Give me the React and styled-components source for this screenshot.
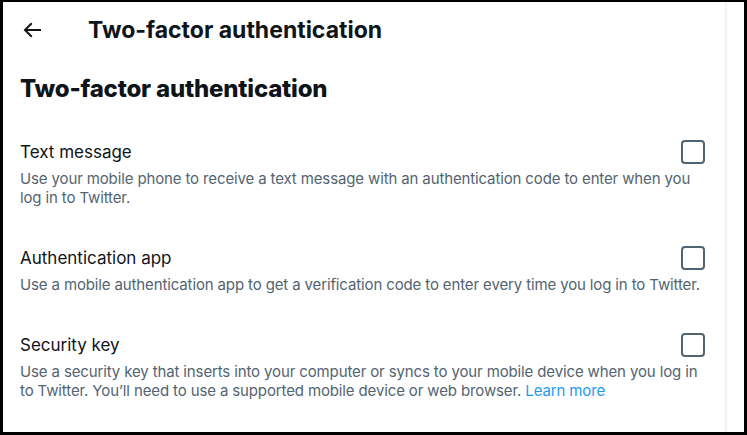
import React from "react";
import styled, { createGlobalStyle } from "styled-components";

const GlobalStyle = createGlobalStyle`
  html, body {
    margin: 0;
    padding: 0;
    background: #fff;
  }
  body {
    font-family: Inter, "Liberation Sans", Arial, sans-serif;
    color: #0f1419;
    -webkit-font-smoothing: antialiased;
  }
`;

const Frame = styled.div`
  width: 747px;
  height: 435px;
  box-sizing: border-box;
  border: 3px solid #000;
  border-top-width: 2px;
  background: #fff;
  overflow: hidden;
  display: flex;
`;

const Column = styled.div`
  width: 724px;
  box-sizing: border-box;
  border-right: 2px solid #eff3f4;
  display: flex;
  flex-direction: column;
  overflow: hidden;

  & > * {
    flex-shrink: 0;
  }
`;

const Header = styled.div`
  height: 55px;
  padding-left: 17px;
  display: flex;
  align-items: center;
`;

const BackButton = styled.div`
  width: 24px;
  height: 24px;
  display: flex;
  color: #0f1419;
  margin-right: 44px;
`;

const HeaderTitle = styled.h2`
  margin: 0;
  font-size: 23px;
  font-weight: 700;
  line-height: 28px;
`;

const SectionTitle = styled.h1`
  margin: 17px 0 0;
  padding: 0 17px;
  font-size: 24px;
  font-weight: 800;
  line-height: 30px;
  letter-spacing: -0.2px;
`;

const Options = styled.div`
  margin-top: 36px;
  display: flex;
  flex-direction: column;
`;

const Option = styled.label`
  display: flex;
  flex-direction: column;
  padding: 0 20px 39px 17px;
  cursor: pointer;
`;

const OptionHead = styled.div`
  display: flex;
  align-items: center;
  justify-content: space-between;
  height: 24px;
`;

const OptionLabel = styled.span`
  font-size: 17px;
  line-height: 24px;
  font-weight: 400;
  color: #0f1419;
`;

const Checkbox = styled.span`
  width: 24px;
  height: 24px;
  box-sizing: border-box;
  border: 2px solid #536471;
  border-radius: 4px;
`;

const Description = styled.p`
  margin: 5px 0 0;
  font-size: 15px;
  line-height: 19px;
  letter-spacing: -0.13px;
  color: #536471;
`;

const LearnMore = styled.a`
  color: #1d9bf0;
  text-decoration: none;
`;

const options = [
  {
    label: "Text message",
    text: "Use your mobile phone to receive a text message with an authentication code to enter when you log in to Twitter.",
  },
  {
    label: "Authentication app",
    text: "Use a mobile authentication app to get a verification code to enter every time you log in to Twitter.",
  },
  {
    label: "Security key",
    text: "Use a security key that inserts into your computer or syncs to your mobile device when you log in to Twitter. You’ll need to use a supported mobile device or web browser.",
    link: "Learn more",
  },
];

const BackArrow = () => (
  <svg viewBox="0 0 24 24" width="24" height="24" fill="currentColor">
    <path d="M7.414 13l5.043 5.04-1.414 1.42L3.586 12l7.457-7.46 1.414 1.42L7.414 11H21v2H7.414z" />
  </svg>
);

export default function App() {
  return (
    <>
      <GlobalStyle />
      <Frame>
        <Column>
          <Header>
            <BackButton>
              <BackArrow />
            </BackButton>
            <HeaderTitle>Two-factor authentication</HeaderTitle>
          </Header>
          <SectionTitle>Two-factor authentication</SectionTitle>
          <Options>
            {options.map((o) => (
              <Option key={o.label}>
                <OptionHead>
                  <OptionLabel>{o.label}</OptionLabel>
                  <Checkbox />
                </OptionHead>
                <Description>
                  {o.text}
                  {o.link && (
                    <>
                      {" "}
                      <LearnMore href="#">{o.link}</LearnMore>
                    </>
                  )}
                </Description>
              </Option>
            ))}
          </Options>
        </Column>
      </Frame>
    </>
  );
}
